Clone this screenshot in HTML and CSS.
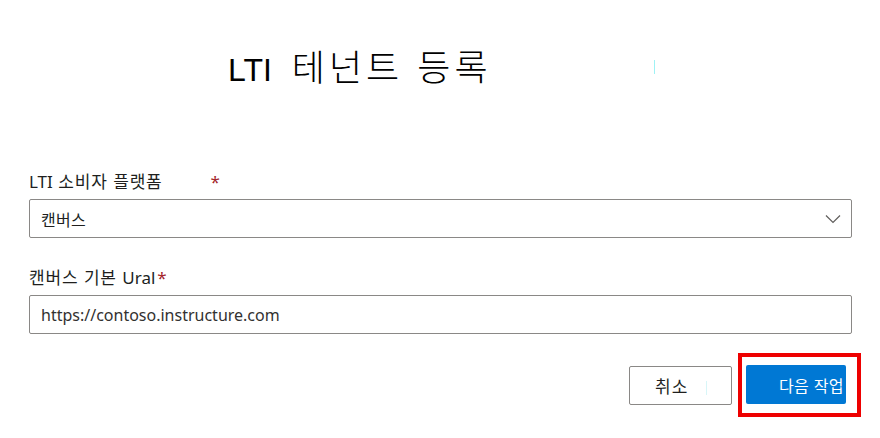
FILE: index.html
```html
<!DOCTYPE html>
<html lang="ko">
<head>
<meta charset="utf-8">
<link rel="stylesheet" href="styles.css">
</head>
<body>
<div class="page">
  <div class="title-row">
    <h1 class="title"><span class="title-lti">LTI</span>테넌트 등록</h1>
    <span class="title-mark"></span>
  </div>
  <div class="field field-first">
    <label class="label"><span class="latin">LTI</span> 소비자 플랫폼<span class="req req-far">*</span></label>
    <div class="box select-box">
      <span class="box-text">캔버스</span>
      <svg class="chevron" width="16" height="10" viewBox="0 0 16 10"><path d="M1 1.5 L8 8.5 L15 1.5" fill="none" stroke="#605e5c" stroke-width="1.2"/></svg>
    </div>
  </div>
  <div class="field field-second">
    <label class="label">캔버스 기본 <span class="latin">Ural</span><span class="req">*</span></label>
    <div class="box">
      <span class="box-text latin url">https://contoso.instructure.com</span>
    </div>
  </div>
  <div class="actions">
    <button class="btn btn-default">취소<span class="btn-mark"></span></button>
    <div class="highlight">
      <button class="btn btn-primary">다음 작업</button>
    </div>
  </div>
</div>
</body>
</html>
```
FILE: styles.css
```css
* { box-sizing: border-box; }
html, body { margin: 0; padding: 0; background: #ffffff; }
body {
  font-family: "Noto Sans", "Noto Sans CJK KR", sans-serif;
  color: #201f1e;
  width: 880px;
  height: 438px;
  overflow: hidden;
}
.page { padding: 0 28px 0 29px; }
.title-row {
  display: flex;
  align-items: center;
  height: 130px;
  padding-left: 199px;
  padding-top: 4px;
}
.title {
  margin: 0;
  font-family: "Noto Sans CJK KR", sans-serif;
  font-weight: 300;
  font-size: 36px;
  letter-spacing: 4px;
  line-height: 42px;
  color: #000;
  width: 426px;
  white-space: nowrap;
}
.title-lti {
  font-family: "Liberation Sans", sans-serif;
  font-weight: 400;
  font-size: 32px;
  letter-spacing: 0;
  margin-right: 20px;
}
.title-mark {
  display: block;
  width: 1px;
  height: 14px;
  background: #9ff2f5;
  margin-top: 0;
}
.field { display: flex; flex-direction: column; }
.field-first { margin-top: 41px; }
.field-second { margin-top: 29px; }
.label {
  font-family: "Noto Sans CJK KR", sans-serif;
  font-size: 17px;
  letter-spacing: 0.8px;
  line-height: 20px;
  color: #201f1e;
  height: 28px;
  margin-left: 0;
}
.latin { font-family: "Noto Sans", sans-serif; letter-spacing: 0; }
.req { color: #a4262c; margin-left: 2px; font-family: "Noto Sans", sans-serif; }
.req-far { margin-left: 48px; }
.box {
  display: flex;
  align-items: center;
  justify-content: space-between;
  width: 823px;
  height: 39px;
  border: 1px solid #8a8886;
  border-radius: 2px;
  padding: 0 9px 0 11px;
  background: #fff;
}
.box-text {
  font-family: "Noto Sans CJK KR", sans-serif;
  font-size: 16px;
  letter-spacing: 0.3px;
  color: #201f1e;
}
.url { font-family: "Noto Sans", sans-serif; color: #323130; font-size: 16px; letter-spacing: 0; }
.chevron { margin-right: 1px; }
.actions {
  display: flex;
  justify-content: flex-end;
  align-items: center;
  margin-top: 19px;
}
.btn {
  font-family: "Noto Sans CJK KR", sans-serif;
  height: 39px;
  border-radius: 2px;
  cursor: pointer;
}
.btn-default {
  position: relative;
  width: 103px;
  background: #fff;
  border: 1px solid #8a8886;
  color: #201f1e;
  font-size: 17px;
  letter-spacing: 1px;
  padding: 0 0 0 25px;
  text-align: left;
}
.btn-mark {
  position: absolute;
  left: 76px;
  top: 14px;
  width: 1px;
  height: 14px;
  background: #d8f6f8;
}
.highlight {
  margin-left: 6px;
  border: 4px solid #ee0000;
  padding: 8px 11px 9px 4px;
  margin-right: -9px;
}
.btn-primary {
  width: 100px;
  background: #0078d4;
  border: none;
  color: #fff;
  font-size: 16px;
  padding: 0 0 0 33px;
  text-align: left;
  letter-spacing: 0.3px;
  white-space: nowrap;
  overflow: visible;
}
```
